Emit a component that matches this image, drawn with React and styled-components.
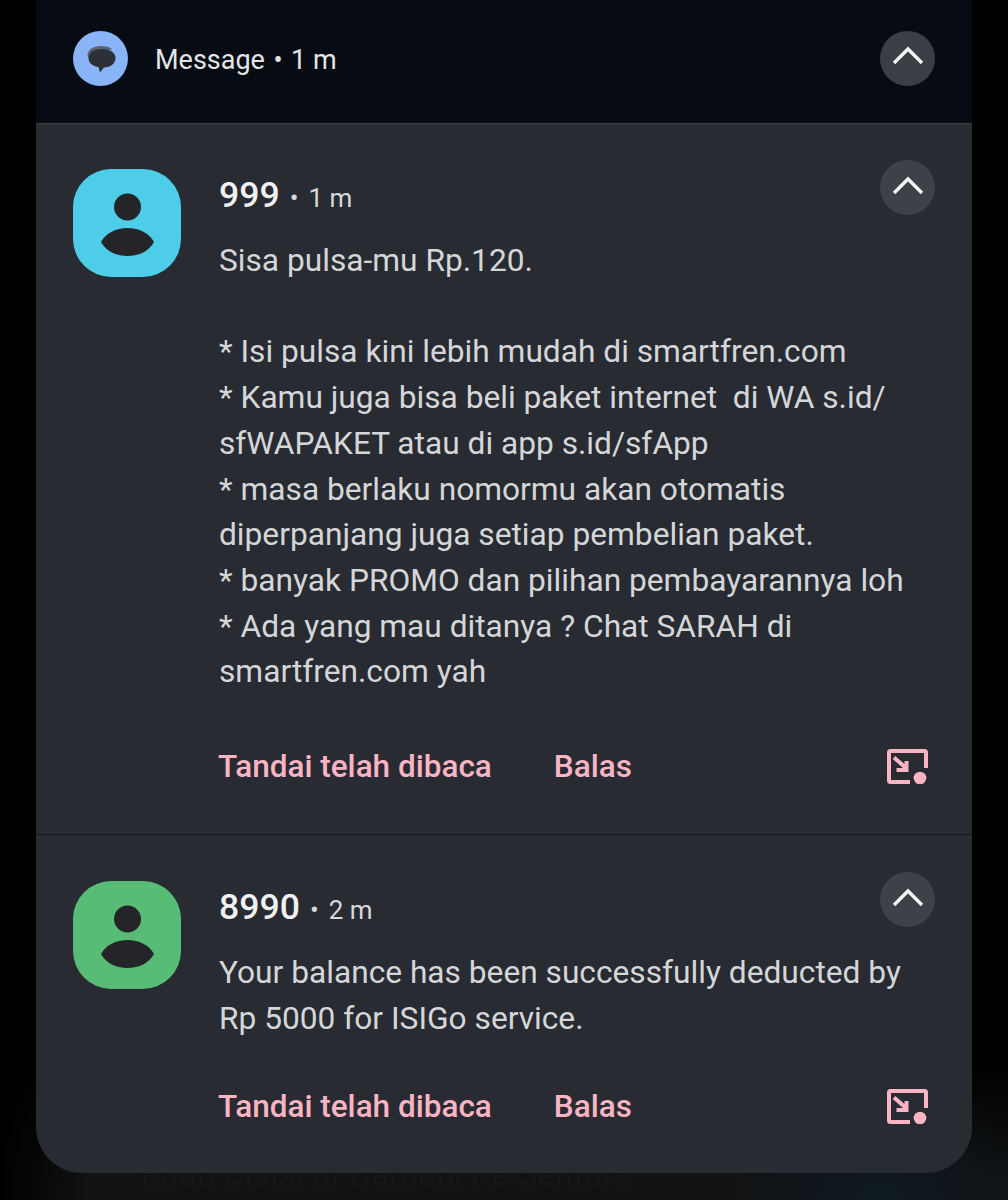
import React from "react";
import styled, { createGlobalStyle } from "styled-components";

const GlobalStyle = createGlobalStyle`
  html, body {
    margin: 0;
    padding: 0;
    background: #000;
  }
  * {
    box-sizing: border-box;
  }
`;

const Screen = styled.div`
  width: 1008px;
  height: 1200px;
  overflow: hidden;
  padding-left: 36px;
  font-family: Roboto, "Noto Sans", sans-serif;
  background:
    linear-gradient(90deg, #000 0, rgba(0, 0, 0, 0) 90px),
    radial-gradient(circle at 880px 1210px, #0e1a22 0, rgba(14, 26, 34, 0) 150px),
    linear-gradient(#000 0, #000 1060px, #111213 1180px);
`;

const Panel = styled.div`
  width: 936px;
  height: 1173px;
  background: #282b32;
  border-radius: 0 0 46px 46px;
  overflow: hidden;
`;

const GroupHeader = styled.header`
  height: 124px;
  background: #060b14;
  border-bottom: 1px solid #3a3d44;
  display: flex;
  align-items: center;
  padding: 0 37px 7px;
`;

const AppBadge = styled.div`
  width: 55px;
  height: 55px;
  border-radius: 50%;
  background: #8ab4f8;
  display: flex;
  align-items: center;
  justify-content: center;
`;

const AppLabel = styled.div`
  flex: 1;
  margin: 3px 0 0 27px;
  color: #e4e5e7;
  font-size: 27px;
`;

const Dot = styled.span`
  margin: 0 8.5px;
`;

const ExpandButton = styled.button`
  width: 55px;
  height: 55px;
  padding: 0 0 6px;
  border: 0;
  border-radius: 50%;
  flex-shrink: 0;
  background: ${(p) => (p.$dark ? "#3b3e45" : "#3e4148")};
  display: flex;
  align-items: center;
  justify-content: center;
`;

const Notification = styled.article`
  display: flex;
  gap: 38px;
  padding: ${(p) => p.$top}px 37px 0;
  height: ${(p) => p.$height}px;
  border-bottom: ${(p) => (p.$divider ? "1px solid #16181c" : "0")};
`;

const Avatar = styled.div`
  width: 108px;
  height: 108px;
  border-radius: 38px;
  flex-shrink: 0;
  background: ${(p) => p.$color};
`;

const Content = styled.div`
  flex: 1;
  min-width: 0;
`;

const TitleRow = styled.div`
  display: flex;
  justify-content: space-between;
  align-items: flex-start;
  height: 50px;
  margin-top: -9px;
`;

const Title = styled.div`
  display: flex;
  align-items: baseline;
  padding-top: 13px;
  color: #f1f1f2;
  font-size: 35.6px;
  font-weight: 500;
  line-height: 44px;
`;

const Time = styled.span`
  color: #d8d9db;
  font-size: 26px;
  font-weight: 400;
`;

const TimeDot = styled.span`
  margin: 0 10px 0 10px;
`;

const Body = styled.div`
  margin-top: 28px;
  color: #d5d6d8;
  font-size: 31.7px;
  line-height: 45.7px;
  white-space: pre-wrap;
`;

const Actions = styled.div`
  display: flex;
  align-items: center;
  justify-content: space-between;
  margin-top: ${(p) => p.$gap}px;
  padding-right: 7px;
  height: 44px;
`;

const ActionLinks = styled.div`
  display: flex;
  gap: 62px;
  margin-left: -1px;
`;

const ActionLink = styled.a`
  color: #fbb4c4;
  font-size: 31.5px;
  font-weight: 500;
`;

const Behind = styled.div`
  margin-left: 104px;
  height: 13px;
  overflow: hidden;
  color: #161618;
  font-size: 33px;
  line-height: 4px;
  white-space: nowrap;
`;

const Chevron = () => (
  <svg width="32" height="20" viewBox="0 0 32 20" fill="none">
    <path d="M2 18 L16 4 L30 18" stroke="#f4f4f5" strokeWidth="3.4" />
  </svg>
);

const MessageIcon = () => (
  <svg width="36" height="36" viewBox="0 0 36 36">
    <path d="M4.5 16 C4.5 9.5 10 6 18 6 C23 6 27 7 29.5 9.5 L12 12 L6 18 Z" fill="#596174" />
    <path
      d="M19 9 C27 9 32.5 12.5 32.5 18 C32.5 23.5 27.5 27.5 21 27.5 L17 32.5 L15.5 27 C10 26.5 5.5 23 5.5 18 C5.5 12.5 11 9 19 9 Z"
      fill="#2c3038"
    />
  </svg>
);

const PersonIcon = () => (
  <svg width="108" height="108" viewBox="0 0 108 108">
    <circle cx="54.5" cy="38" r="13.5" fill="#232528" />
    <path
      d="M28 73 C33 64 43 59 54.5 59 C66 59 76 64 81 73 C76 82 66 87 54.5 87 C43 87 33 82 28 73 Z"
      fill="#232528"
    />
  </svg>
);

const BubbleIcon = () => (
  <svg width="41" height="35" viewBox="0 0 41 35" fill="none">
    <path d="M23 33 H3.5 a1.5 1.5 0 0 1 -1.5 -1.5 V3.5 a1.5 1.5 0 0 1 1.5 -1.5 H37.5 a1.5 1.5 0 0 1 1.5 1.5 V19" stroke="#fbb4c4" strokeWidth="4" />
    <path d="M7 8.5 L19 19 M19.5 12 V21 H9.5" stroke="#fbb4c4" strokeWidth="4" />
    <circle cx="33" cy="29" r="6.3" fill="#fbb4c4" />
  </svg>
);

const messageBody = `Sisa pulsa-mu Rp.120.

* Isi pulsa kini lebih mudah di smartfren.com
* Kamu juga bisa beli paket internet  di WA s.id/
sfWAPAKET atau di app s.id/sfApp
* masa berlaku nomormu akan otomatis
diperpanjang juga setiap pembelian paket.
* banyak PROMO dan pilihan pembayarannya loh
* Ada yang mau ditanya ? Chat SARAH di
smartfren.com yah`;

const notifications = [
  {
    sender: "999",
    time: "1 m",
    color: "#4dcde8",
    top: 45,
    height: 711,
    gap: 49,
    divider: true,
    body: messageBody,
  },
  {
    sender: "8990",
    time: "2 m",
    color: "#58bb76",
    top: 46,
    height: 338,
    gap: 43,
    body: "Your balance has been successfully deducted by\nRp 5000 for ISIGo service.",
  },
];

const App = () => (
  <Screen>
    <GlobalStyle />
    <Panel>
      <GroupHeader>
        <AppBadge>
          <MessageIcon />
        </AppBadge>
        <AppLabel>
          Message<Dot>•</Dot>1 m
        </AppLabel>
        <ExpandButton $dark>
          <Chevron />
        </ExpandButton>
      </GroupHeader>
      {notifications.map((n) => (
        <Notification key={n.sender} $top={n.top} $height={n.height} $divider={n.divider}>
          <Avatar $color={n.color}>
            <PersonIcon />
          </Avatar>
          <Content>
            <TitleRow>
              <Title>
                {n.sender}
                <Time>
                  <TimeDot>•</TimeDot>
                  {n.time}
                </Time>
              </Title>
              <ExpandButton>
                <Chevron />
              </ExpandButton>
            </TitleRow>
            <Body>{n.body}</Body>
            <Actions $gap={n.gap}>
              <ActionLinks>
                <ActionLink>Tandai telah dibaca</ActionLink>
                <ActionLink>Balas</ActionLink>
              </ActionLinks>
              <BubbleIcon />
            </Actions>
          </Content>
        </Notification>
      ))}
    </Panel>
    <Behind>Ragu Disisi of Damuni Re-Senture</Behind>
  </Screen>
);

export default App;
